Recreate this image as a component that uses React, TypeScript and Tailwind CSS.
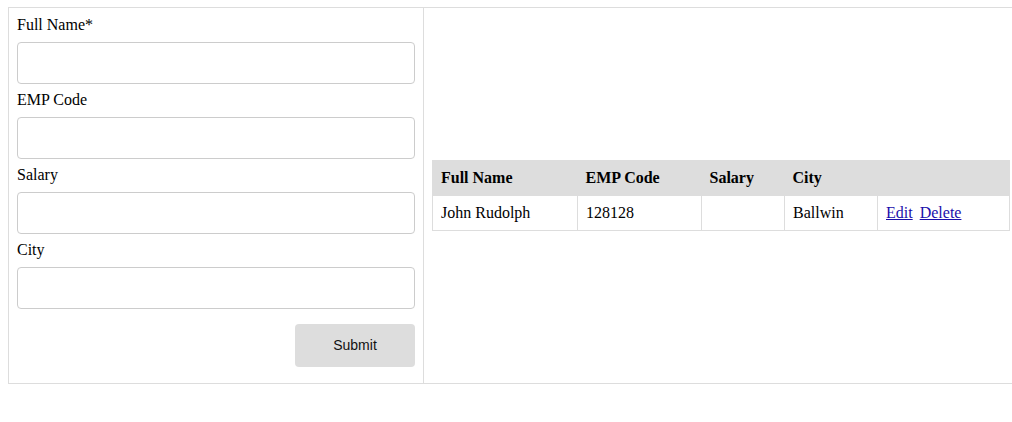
const fields = ["Full Name*", "EMP Code", "Salary", "City"]

const rows = [{ fullName: "John Rudolph", empCode: "128128", salary: "", city: "Ballwin" }]

const EmployeeForm = () => {
  return (
    <form className="flex flex-col px-2 pt-2 pb-4">
      {fields.map((label, i) => (
        <div key={label} className={i > 0 ? "mt-[7px] flex flex-col" : "flex flex-col"}>
          <label className="leading-[18px] mb-2 text-[16px] text-black">{label}</label>
          <input
            type="text"
            className="h-[42px] w-[398px] rounded border border-[#ccc] px-2"
          />
        </div>
      ))}
      <div className="mt-[15px] flex justify-end">
        <button
          type="button"
          className="h-[43px] w-[120px] rounded bg-[#ddd] text-[14px] text-[#111] font-['Liberation_Sans',Arial,sans-serif]"
        >
          Submit
        </button>
      </div>
    </form>
  )
}

const EmployeeList = () => {
  return (
    <table className="w-[578px] border-collapse border border-[#ddd] text-[16px] leading-[18px]">
      <thead>
        <tr className="bg-[#ddd]">
          <th className="w-[145px] px-2 py-[8px] text-left font-bold">Full Name</th>
          <th className="w-[124px] px-2 py-[8px] text-left font-bold">EMP Code</th>
          <th className="w-[83px] px-2 py-[8px] text-left font-bold">Salary</th>
          <th className="w-[93px] px-2 py-[8px] text-left font-bold">City</th>
          <th className="px-2 py-[8px]"></th>
        </tr>
      </thead>
      <tbody>
        {rows.map((r) => (
          <tr key={r.empCode}>
            <td className="border border-[#ddd] p-2">{r.fullName}</td>
            <td className="border border-[#ddd] p-2">{r.empCode}</td>
            <td className="border border-[#ddd] p-2">{r.salary}</td>
            <td className="border border-[#ddd] p-2">{r.city}</td>
            <td className="border border-[#ddd] p-2">
              <a href="#" className="text-[#1a0dab] underline">Edit</a>
              <a href="#" className="ml-[7px] text-[#1a0dab] underline">Delete</a>
            </td>
          </tr>
        ))}
      </tbody>
    </table>
  )
}

export default function App() {
  return (
    <div className="h-[422px] w-[1012px] overflow-hidden bg-white font-['Liberation_Serif','Times_New_Roman',serif] text-black">
      <div className="ml-2 mt-[7px] flex w-[1020px] border-y border-l border-[#ddd]">
        <div className="w-[415px] border-r border-[#ddd]">
          <EmployeeForm />
        </div>
        <div className="flex flex-1 items-center px-2">
          <EmployeeList />
        </div>
      </div>
    </div>
  )
}
